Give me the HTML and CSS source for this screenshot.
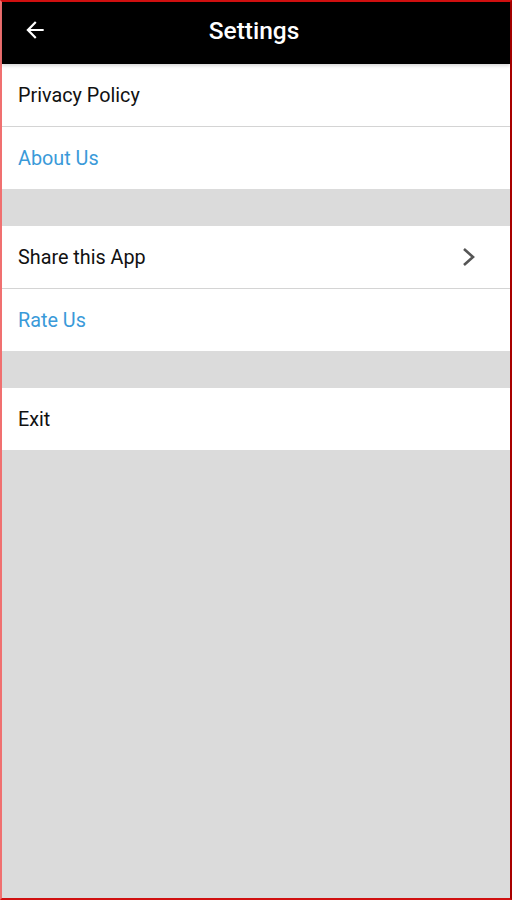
FILE: index.html
```html
<!DOCTYPE html>
<html lang="en">

<head>
    <meta charset="UTF-8">
    <meta name="viewport" content="width=device-width, initial-scale=1.0">
    <title>Settings</title>

    <link rel="stylesheet" href="styles.css">

</head>

<body>
    <div class="frame">
        <header class="topbar">
            <svg class="back" width="26" height="26" viewBox="0 0 24 24">
                <path d="M20 11H7.83l5.59-5.59L12 4l-8 8 8 8 1.41-1.41L7.83 13H20v-2z" fill="#fff" />
            </svg>
            <h1>Settings</h1>
        </header>

        <ul class="group">
            <li class="item">Privacy Policy</li>
            <li class="item link">About Us</li>
        </ul>

        <ul class="group">
            <li class="item">
                Share this App
                <svg class="chevron" width="16" height="20" viewBox="0 0 16 20">
                    <polyline points="3,2 12,10 3,18" fill="none" stroke="#555" stroke-width="2.6" />
                </svg>
            </li>
            <li class="item link">Rate Us</li>
        </ul>

        <ul class="group">
            <li class="item">Exit</li>
        </ul>
    </div>
</body>

</html>
```

FILE: styles.css
```css
* {
    margin: 0;
    padding: 0;
    list-style: none;
    box-sizing: border-box;
}

body {
    font-family: Roboto, "Noto Sans", sans-serif;
    background: #fff;
}

.frame {
    height: 900px;
    background: #dbdbdb;
    border: 2px solid #d01010;
    border-left-color: #f07070;
    border-right-color: #a80000;
    display: flex;
    flex-direction: column;
}

.topbar {
    height: 62px;
    background: #000;
    color: #fff;
    display: flex;
    align-items: center;
    justify-content: center;
    position: relative;
    box-shadow: 0 2px 3px rgba(0, 0, 0, 0.15);
}

.topbar h1 {
    font-size: 24.5px;
    font-weight: 500;
    margin-right: 4px;
    margin-bottom: 5px;
}

.back {
    position: absolute;
    left: 20px;
    top: 15px;
}

.group {
    background: #fff;
    margin-bottom: 37px;
}

.item {
    height: 62px;
    padding: 0 16px;
    display: flex;
    align-items: center;
    justify-content: space-between;
    font-size: 19.8px;
    color: #111;
}

.item + .item {
    height: 63px;
    border-top: 1px solid #d4d4d4;
}

.link {
    color: #3a9ad9;
}

.chevron {
    margin-right: 17px;
}
```
